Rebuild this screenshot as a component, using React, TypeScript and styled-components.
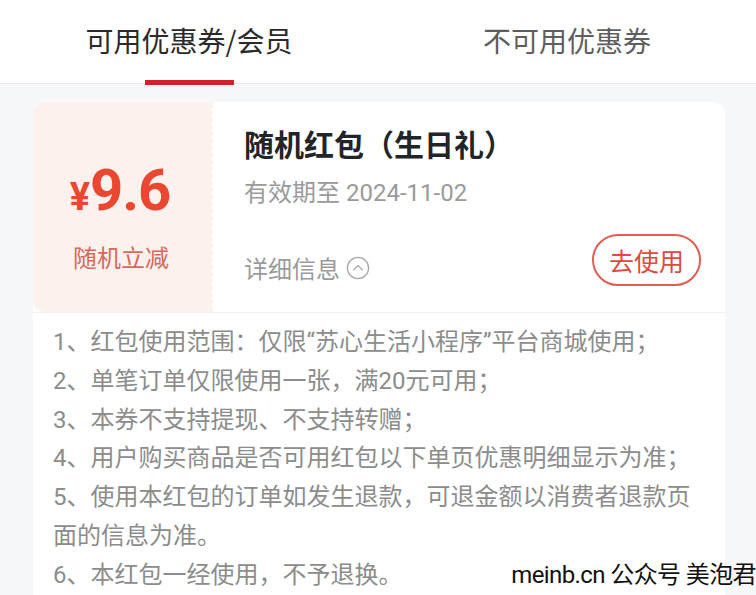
import React from "react";
import styled, { createGlobalStyle } from "styled-components";

const GlobalStyle = createGlobalStyle`
  html, body {
    margin: 0;
    padding: 0;
    background: #f6f7f9;
  }
  body {
    font-family: Roboto, "Noto Sans CJK SC", sans-serif;
  }
`;

const tabs = [
  { label: "可用优惠券/会员", active: true },
  { label: "不可用优惠券", active: false },
];

const rules = [
  "1、红包使用范围：仅限“苏心生活小程序”平台商城使用；",
  "2、单笔订单仅限使用一张，满20元可用；",
  "3、本券不支持提现、不支持转赠；",
  "4、用户购买商品是否可用红包以下单页优惠明细显示为准；",
  "5、使用本红包的订单如发生退款，可退金额以消费者退款页面的信息为准。",
  "6、本红包一经使用，不予退换。",
];

const CircleUp = () => (
  <svg width="24" height="24" viewBox="0 0 24 24" fill="none" stroke="#a8a8a8" strokeWidth="1.3" strokeLinecap="round" strokeLinejoin="round">
    <circle cx="12" cy="12" r="10.6" />
    <path d="M7.6 13.9 12 9.5l4.4 4.4" />
  </svg>
);

export default function App() {
  return (
    <Page>
      <GlobalStyle />
      <TabBar>
        {tabs.map((t) => (
          <Tab key={t.label} $active={t.active}>
            {t.label}
          </Tab>
        ))}
      </TabBar>
      <Body>
        <Card>
          <CouponRow>
            <Amount>
              <Price>
                <Yen>¥</Yen>9.6
              </Price>
              <AmountNote>随机立减</AmountNote>
            </Amount>
            <Info>
              <Title>随机红包（生日礼）</Title>
              <Expire>有效期至 2024-11-02</Expire>
              <ActionRow>
                <Detail>
                  详细信息
                  <CircleUp />
                </Detail>
                <UseButton>去使用</UseButton>
              </ActionRow>
            </Info>
          </CouponRow>
          <Rules>
            {rules.map((r) => (
              <p key={r}>{r}</p>
            ))}
          </Rules>
        </Card>
      </Body>
      <Watermark>meinb.cn 公众号 美泡君</Watermark>
    </Page>
  );
}

const Page = styled.div`
  position: relative;
  width: 756px;
  height: 595px;
  overflow: hidden;
  background: #f6f7f9;
`;

const TabBar = styled.div`
  display: flex;
  height: 84px;
  background: #fff;
  border-bottom: 1px solid #e6e7ea;
  box-sizing: border-box;
`;

const Tab = styled.div<{ $active: boolean }>`
  position: relative;
  flex: 1;
  display: flex;
  justify-content: center;
  padding-top: 20px;
  font-family: "Noto Sans CJK SC", sans-serif;
  font-size: 28px;
  line-height: 40px;
  color: ${(p) => (p.$active ? "#2a2a2a" : "#5e5e5e")};

  &::after {
    content: "";
    display: ${(p) => (p.$active ? "block" : "none")};
    position: absolute;
    left: 50%;
    bottom: -2px;
    width: 89px;
    height: 5px;
    margin-left: -44px;
    background: #d3202a;
  }
`;

const Body = styled.div`
  padding: 18px 31px 0 33px;
`;

const Card = styled.div`
  background: #fff;
  border-radius: 12px 12px 0 0;
  overflow: hidden;
`;

const CouponRow = styled.div`
  display: flex;
  height: 210px;
  border-bottom: 1px solid #f1f1f3;
`;

const Amount = styled.div`
  position: relative;
  width: 180px;
  flex: none;
  display: flex;
  flex-direction: column;
  align-items: center;
  padding-top: 56px;
  box-sizing: border-box;
  background: #fdf1ed;
  border-radius: 12px 0 0 12px;

  &::after {
    content: "";
    position: absolute;
    top: 4px;
    bottom: 4px;
    right: 0;
    width: 3px;
    background: radial-gradient(circle at 100% 50%, #fff 1.6px, transparent 2px) 0 0 / 3px 7px repeat-y;
  }
`;

const Price = styled.div`
  display: flex;
  align-items: baseline;
  font-family: Roboto, sans-serif;
  font-weight: 700;
  font-size: 58px;
  line-height: 64px;
  color: #ea4630;
  letter-spacing: -1px;
  margin-left: -6px;
`;

const Yen = styled.span`
  font-size: 38px;
  margin-right: 1px;
`;

const AmountNote = styled.div`
  margin-top: 12px;
  font-family: "Noto Sans CJK SC", sans-serif;
  font-size: 24px;
  line-height: 32px;
  color: #d8685a;
  margin-left: -4px;
`;

const Info = styled.div`
  flex: 1;
  display: flex;
  flex-direction: column;
  padding: 21px 24px 0 31px;
  font-family: "Noto Sans CJK SC", sans-serif;
`;

const Title = styled.div`
  font-size: 30px;
  line-height: 40px;
  font-weight: 700;
  color: #222428;
`;

const Expire = styled.div`
  margin-top: 14px;
  font-family: Roboto, "Noto Sans CJK SC", sans-serif;
  font-size: 24px;
  line-height: 32px;
  color: #9a9a9a;
`;

const ActionRow = styled.div`
  display: flex;
  align-items: center;
  justify-content: space-between;
  margin-top: 25px;
`;

const Detail = styled.div`
  display: flex;
  align-items: center;
  gap: 6px;
  font-size: 24px;
  line-height: 32px;
  color: #9a9a9a;
  margin-top: 15px;
`;

const UseButton = styled.div`
  width: 109px;
  height: 52px;
  box-sizing: border-box;
  display: flex;
  align-items: center;
  justify-content: center;
  border: 2px solid #df5d52;
  border-radius: 26px;
  font-size: 25px;
  color: #e04a3c;
`;

const Rules = styled.div`
  padding: 10px 20px 20px 20px;
  font-family: Roboto, "Noto Sans CJK SC", sans-serif;
  font-size: 24px;
  line-height: 38.8px;
  color: #8c8c8c;

  p {
    margin: 0;
  }
`;

const Watermark = styled.div`
  position: absolute;
  right: 0;
  bottom: 5px;
  font-family: Roboto, "Noto Sans CJK SC", sans-serif;
  font-size: 24px;
  line-height: 30px;
  color: #111;
  letter-spacing: -0.6px;
`;
